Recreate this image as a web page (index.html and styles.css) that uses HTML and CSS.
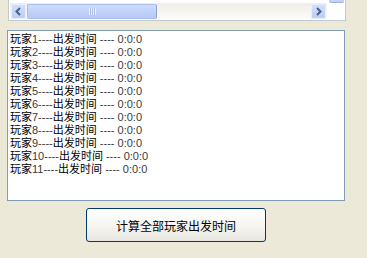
FILE: index.html
```html
<!DOCTYPE html>
<html lang="zh-CN">
<head>
    <meta charset="UTF-8">
    <title>出发时间</title>
    <link rel="stylesheet" href="styles.css">
</head>
<body>
    <!-- 上方列表框的底部（水平滚动条） -->
    <div class="list-box">
        <div class="hscroll">
            <div class="arrow-btn">
                <svg width="15" height="15" viewBox="0 0 15 15"><polyline points="9,4 5.5,7.5 9,11" fill="none" stroke="#4d6185" stroke-width="2"/></svg>
            </div>
            <div class="thumb"><span class="grip"></span></div>
            <div class="track-space"></div>
            <div class="arrow-btn">
                <svg width="15" height="15" viewBox="0 0 15 15"><polyline points="6,4 9.5,7.5 6,11" fill="none" stroke="#4d6185" stroke-width="2"/></svg>
            </div>
        </div>
        <div class="corner"><div class="down-btn-end"></div></div>
    </div>

    <!-- 结果文本框 -->
    <div class="log">
        <div>玩家<span class="lt">1----</span>出发时间<span class="lt"> ---- 0:0:0</span></div>
        <div>玩家<span class="lt">2----</span>出发时间<span class="lt"> ---- 0:0:0</span></div>
        <div>玩家<span class="lt">3----</span>出发时间<span class="lt"> ---- 0:0:0</span></div>
        <div>玩家<span class="lt">4----</span>出发时间<span class="lt"> ---- 0:0:0</span></div>
        <div>玩家<span class="lt">5----</span>出发时间<span class="lt"> ---- 0:0:0</span></div>
        <div>玩家<span class="lt">6----</span>出发时间<span class="lt"> ---- 0:0:0</span></div>
        <div>玩家<span class="lt">7----</span>出发时间<span class="lt"> ---- 0:0:0</span></div>
        <div>玩家<span class="lt">8----</span>出发时间<span class="lt"> ---- 0:0:0</span></div>
        <div>玩家<span class="lt">9----</span>出发时间<span class="lt"> ---- 0:0:0</span></div>
        <div>玩家<span class="lt">10----</span>出发时间<span class="lt"> ---- 0:0:0</span></div>
        <div>玩家<span class="lt">11----</span>出发时间<span class="lt"> ---- 0:0:0</span></div>
    </div>

    <button type="button" class="calc-button">计算全部玩家出发时间</button>
</body>
</html>
```

FILE: styles.css
```css
body {
    margin: 0;
    width: 367px;
    height: 258px;
    background-color: #ece9d8;
    font-family: "Liberation Sans", "Noto Sans CJK SC", sans-serif;
    overflow: hidden;
}

/* 上方列表框 */
.list-box {
    display: flex;
    margin-left: 8px;
    width: 338px;
    height: 21px;
    box-sizing: border-box;
    border: 1px solid #c3c9d2;
    border-top: none;
    background-color: #fff;
}

.hscroll {
    display: flex;
    margin: 3px 0 0 1px;
    width: 317px;
    height: 17px;
    background: linear-gradient(#efede6, #fdfdfb);
}

.arrow-btn {
    width: 15px;
    height: 15px;
    margin: 1px;
    box-sizing: border-box;
    border-radius: 2px;
    background: linear-gradient(#d3e0fd, #b9cdf8);
    box-shadow: inset 0 0 0 1px #e8eefc;
}

.arrow-btn svg {
    display: block;
}

.thumb {
    display: flex;
    justify-content: center;
    align-items: center;
    width: 130px;
    height: 15px;
    margin: 1px 0;
    box-sizing: border-box;
    border: 1px solid #a9bde8;
    border-right-color: #8ea3cf;
    border-radius: 2px;
    background: linear-gradient(#cddbfc, #b5c9f6);
}

.grip {
    width: 7px;
    height: 7px;
    background: repeating-linear-gradient(90deg, #eef3fe 0, #eef3fe 1px, #a9bbe4 1px, #a9bbe4 2px);
}

.track-space {
    flex: 1;
}

.corner {
    width: 18px;
}

.down-btn-end {
    margin-left: 2px;
    width: 15px;
    height: 2px;
    background-color: #c1d3fb;
    border-bottom: 1px solid #9fb2dc;
    border-radius: 0 0 2px 2px;
}

/* 结果文本框 */
.log {
    margin: 9px 0 0 7px;
    width: 338px;
    height: 171px;
    box-sizing: border-box;
    padding: 2px 2px;
    border: 1px solid #7f9db9;
    background-color: #fff;
    font-size: 11px;
    line-height: 13px;
    color: #000;
}

.log .lt {
    color: #3a3a3a;
}

.calc-button {
    display: block;
    margin: 7px 0 0 86px;
    width: 180px;
    height: 34px;
    border: 1px solid #003c74;
    border-radius: 3px;
    background: linear-gradient(#ffffff, #f4f3ee 60%, #e6e5de);
    font-family: "Liberation Sans", "Noto Sans CJK SC", sans-serif;
    font-size: 12px;
    color: #000;
    padding: 0;
}
```
